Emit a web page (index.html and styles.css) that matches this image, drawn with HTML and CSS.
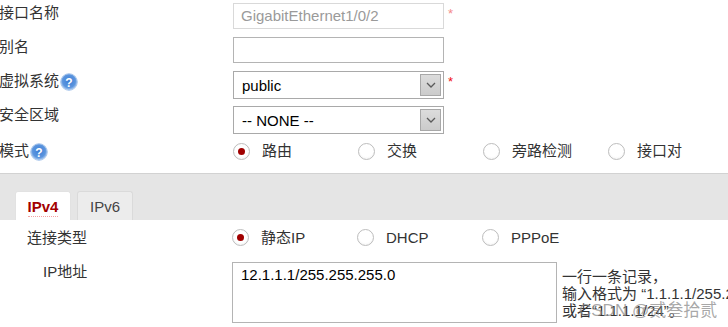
FILE: index.html
```html
<!DOCTYPE html>
<html lang="zh">
<head>
<meta charset="utf-8">
<link rel="stylesheet" href="styles.css">
</head>
<body>
<div class="form">
  <div class="row">
    <div class="lbl">接口名称</div>
    <div class="val"><div class="txt disabled">GigabitEthernet1/0/2</div><span class="req pale">*</span></div>
  </div>
  <div class="row">
    <div class="lbl">别名</div>
    <div class="val"><div class="txt"></div></div>
  </div>
  <div class="row">
    <div class="lbl">虚拟系统<svg class="help" viewBox="0 0 18 18"><defs><radialGradient id="hg" cx="50%" cy="45%" r="55%"><stop offset="0" stop-color="#3f7fd6"/><stop offset="0.7" stop-color="#5b95de"/><stop offset="1" stop-color="#b9d3f2"/></radialGradient></defs><circle cx="9" cy="9" r="8.3" fill="url(#hg)" stroke="#a9c6ec" stroke-width="1"/><text x="9" y="13.6" text-anchor="middle" font-family="Liberation Sans" font-weight="bold" font-size="12" fill="#fff">?</text></svg></div>
    <div class="val"><div class="sel"><span>public</span><span class="arrow"><svg viewBox="0 0 10 6"><path d="M1 1 L5 5 L9 1" fill="none" stroke="#5a5a5a" stroke-width="1.3"/></svg></span></div><span class="req">*</span></div>
  </div>
  <div class="row r4">
    <div class="lbl">安全区域</div>
    <div class="val"><div class="sel"><span>-- NONE --</span><span class="arrow"><svg viewBox="0 0 10 6"><path d="M1 1 L5 5 L9 1" fill="none" stroke="#5a5a5a" stroke-width="1.3"/></svg></span></div></div>
  </div>
  <div class="row r5">
    <div class="lbl">模式<svg class="help" viewBox="0 0 18 18"><circle cx="9" cy="9" r="8.3" fill="url(#hg)" stroke="#a9c6ec" stroke-width="1"/><text x="9" y="13.6" text-anchor="middle" font-family="Liberation Sans" font-weight="bold" font-size="12" fill="#fff">?</text></svg></div>
    <div class="radios">
      <div class="opt"><span class="radio on"></span>路由</div>
      <div class="opt"><span class="radio"></span>交换</div>
      <div class="opt"><span class="radio"></span>旁路检测</div>
      <div class="opt"><span class="radio"></span>接口对</div>
    </div>
  </div>
</div>

<div class="tabbar">
  <div class="tab active"><span>IPv4</span></div>
  <div class="tab">IPv6</div>
</div>

<div class="panel">
  <div class="prow">
    <div class="plbl ind1">连接类型</div>
    <div class="radios">
      <div class="opt"><span class="radio on"></span>静态IP</div>
      <div class="opt"><span class="radio"></span>DHCP</div>
      <div class="opt"><span class="radio"></span>PPPoE</div>
    </div>
  </div>
  <div class="prow ip">
    <div class="plbl ind2">IP地址</div>
    <div class="ipval">
      <div class="area">12.1.1.1/255.255.255.0</div>
      <div class="hint">
        <div>一行一条记录，</div>
        <div>输入格式为 “1.1.1.1/255.255.255.0”</div>
        <div>或者“1.1.1.1/24”。</div>
      </div>
    </div>
  </div>
</div>
<div class="watermark">CSDN @贰叁拾贰</div>
</body>
</html>
```

FILE: styles.css
```css
* { box-sizing: border-box; }
html, body { margin: 0; padding: 0; background: #fff; overflow: hidden; }
body {
  font-family: "Liberation Sans", "Noto Sans CJK SC", sans-serif;
  font-size: 15px;
  color: #333;
  width: 728px;
  height: 327px;
  position: relative;
}
.form { display: flex; flex-direction: column; }
.row { display: grid; grid-template-columns: 233px auto; height: 34px; }
.lbl {
  display: flex; align-items: center; height: 26px;
  margin-left: -1px; white-space: nowrap; line-height: 20px;
}
.help { width: 18px; height: 18px; margin-left: 1px; margin-top: 2px; }
.val { display: flex; align-items: flex-start; padding-top: 3px; }
.txt {
  width: 211px; height: 26px; border: 1px solid #b4b4b4;
  padding: 0 7px; line-height: 24px; color: #000; white-space: nowrap;
}
.txt.disabled { border-color: #d9d9d9; color: #9a9a9a; }
.req { color: #f01010; font-size: 13px; margin-left: 4px; margin-top: 5px; line-height: 12px; }
.req.pale { color: #f48a8a; }
.sel {
  width: 211px; height: 28px; border: 1px solid #a9a9a9;
  display: flex; align-items: center; justify-content: space-between;
  padding: 0 2px 0 8px; color: #000;
}
.arrow {
  width: 21px; height: 22px; border: 1px solid #a8a8a8;
  background: linear-gradient(#dcdcdc, #cbcbcb);
  display: flex; align-items: center; justify-content: center;
}
.arrow svg { width: 10px; height: 6px; }
.r4 .val { padding-top: 4px; }
.r5 .lbl { margin-top: 2px; }
.radios { display: flex; align-items: center; height: 30px; }
.opt { width: 125px; display: flex; align-items: center; white-space: nowrap; line-height: 20px; }
.radio {
  width: 17px; height: 17px; border-radius: 50%;
  border: 1px solid #bdbdbd;
  background: radial-gradient(circle at 50% 40%, #fff 55%, #ececec 100%);
  margin-right: 12px; display: flex; align-items: center; justify-content: center;
}
.radio.on::after {
  content: ""; width: 7px; height: 7px; border-radius: 50%; background: #a00000;
}
.tabbar {
  margin-top: 3px; height: 47px;
  border-top: 1px solid #d2d2d2;
  background: #e5e5e5;
  display: flex; align-items: flex-end; gap: 6px; padding-left: 15px;
}
.tab {
  width: 56px; height: 29px;
  border: 1px solid #dadada; border-bottom: none;
  border-radius: 3px 3px 0 0;
  background: #ececec; color: #444;
  display: flex; justify-content: center; padding-top: 6px; line-height: 17px;
}
.tab.active { background: #fff; color: #a30000; font-weight: bold; border-color: #e2e2e2; }
.tab.active span { border-bottom: 1px dotted #f2a4a4; height: 19px; }
.panel { display: flex; flex-direction: column; }
.prow { display: grid; grid-template-columns: 232px auto; height: 35px; align-items: center; }
.plbl { line-height: 20px; white-space: nowrap; }
.ind1 { padding-left: 27px; }
.ind2 { padding-left: 43px; }
.prow.ip { align-items: start; padding-top: 7px; height: auto; }
.ipval { display: flex; }
.area {
  width: 325px; height: 61px; border: 1px solid #b4b4b4;
  color: #000; padding: 3px 8px; line-height: 17px;
}
.hint { margin-left: 5px; padding-top: 6px; line-height: 17px; white-space: nowrap; color: #333; }
.watermark {
  position: absolute; left: 579px; top: 301px;
  font-size: 17px; line-height: 20px; color: rgba(140, 140, 140, 0.75);
  white-space: nowrap;
}
```
